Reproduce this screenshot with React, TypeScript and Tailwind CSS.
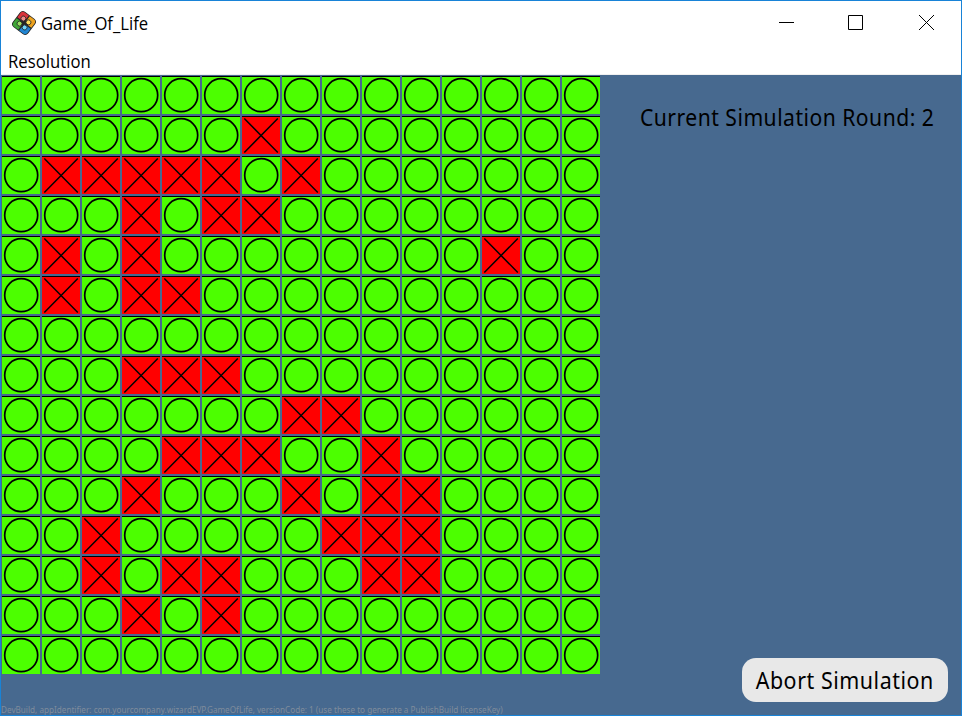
const ROWS = [
  '...............',
  '......x........',
  '.xxxxx.x.......',
  '...x.xx........',
  '.x.x........x..',
  '.x.xx..........',
  '...............',
  '...xxx.........',
  '.......xx......',
  '....xxx..x.....',
  '...x...x.xx....',
  '..x.....xxx....',
  '..x.xx...xx....',
  '...x.x.........',
  '...............',
];

function Cell({ dead }: { dead: boolean }) {
  return (
    <div className={`h-[38px] w-[38px] border-t border-black ${dead ? 'bg-[#ff0000]' : 'bg-[#4cff00]'}`}>
      <svg className="block" width="38" height="37" viewBox="0 1 38 37" fill="none" stroke="#000">
        {dead ? (
          <path d="M2.3 2.5L35.8 36.5M35.8 2.5L2.3 36.5" strokeWidth="1.5" />
        ) : (
          <circle cx="19.2" cy="19.2" r="16.5" strokeWidth="1.7" />
        )}
      </svg>
    </div>
  );
}

function AppIcon() {
  return (
    <svg className="block" width="26" height="26" viewBox="0 0 26 26">
      <g transform="rotate(37 13 13)">
        <rect x="3.4" y="3.4" width="19.2" height="19.2" rx="4" fill="#252525" />
        <path d="M7.4 4.2h5v4.4a4 4 0 0 0-3.8 3.8H4.2v-5a3.2 3.2 0 0 1 3.2-3.2z" fill="#d9333b" />
        <path d="M13.6 4.2h5a3.2 3.2 0 0 1 3.2 3.2v5h-4.4a4 4 0 0 0-3.8-3.8z" fill="#eda31f" />
        <path d="M4.2 13.6h4.4a4 4 0 0 0 3.8 3.8v4.4h-5a3.2 3.2 0 0 1-3.2-3.2z" fill="#3fa536" />
        <path d="M21.8 13.6v5a3.2 3.2 0 0 1-3.2 3.2h-5v-4.4a4 4 0 0 0 3.8-3.8z" fill="#2185d2" />
        <g stroke="#252525" strokeWidth=".8">
          <circle cx="9.8" cy="9.8" r="2.5" fill="#f28a88" />
          <circle cx="16.2" cy="9.8" r="2.5" fill="#ffdf5d" />
          <circle cx="9.8" cy="16.2" r="2.5" fill="#99df62" />
          <circle cx="16.2" cy="16.2" r="2.5" fill="#72d7fa" />
        </g>
      </g>
    </svg>
  );
}

export default function App() {
  return (
    <div className="flex h-[716px] w-[962px] flex-col overflow-hidden border border-[#1883d7] bg-[#47698f] font-['Noto_Sans',sans-serif] text-black">
      <header className="flex h-[44px] shrink-0 items-center bg-white pl-[10px]">
        <AppIcon />
        <h1 className="ml-[4px] w-[200px] origin-left scale-x-[0.925] whitespace-nowrap font-['Open_Sans',sans-serif] text-[18px] leading-[24px]">Game_Of_Life</h1>
        <div className="ml-auto flex h-full pr-[26px]">
          <svg className="block" width="156" height="44" viewBox="0 0 156 44" fill="none" stroke="#000">
            <path d="M0 21.5h15M69.5 14.5h14v14h-14z" />
            <path d="M140 14l15 15M155 14l-15 15" />
          </svg>
        </div>
      </header>
      <nav className="flex h-[30px] shrink-0 items-center border-b border-[#f0f0f0] bg-white pl-[7px] pt-[2px]">
        <span className="origin-left scale-x-[0.93] font-['Open_Sans',sans-serif] text-[18px] leading-[24px]">Resolution</span>
      </nav>
      <main className="flex flex-1">
        <div className="flex w-[601px] shrink-0 flex-col">
          <div className="grid grid-cols-[repeat(15,38px)] gap-[2px] pl-[1px] pt-[1px]">
            {ROWS.flatMap((row, y) => [...row].map((c, x) => <Cell key={`${y}-${x}`} dead={c === 'x'} />))}
          </div>
          <p className="mt-auto origin-left scale-x-[0.906] whitespace-nowrap text-[9px] leading-[11px] text-[#7f8c9c]">
            DevBuild, appIdentifier: com.yourcompany.wizardEVP.GameOfLife, versionCode: 1 (use these to generate a PublishBuild licenseKey)
          </p>
        </div>
        <aside className="flex min-w-0 flex-1 flex-col pb-[13px] pl-[37.5px] pr-[13px] pt-[26px]">
          <p className="w-[340px] origin-left scale-x-[0.88] whitespace-nowrap text-[24px] leading-[32px] tracking-[0.55px]">Current Simulation Round: 2</p>
          <button className="mt-auto flex h-[44px] w-[206px] items-center justify-center self-end rounded-[14px] bg-[#e8e8e8]">
            <span className="scale-x-[0.893] whitespace-nowrap text-[24px] leading-[32px] tracking-[0.6px]">Abort Simulation</span>
          </button>
        </aside>
      </main>
    </div>
  );
}
